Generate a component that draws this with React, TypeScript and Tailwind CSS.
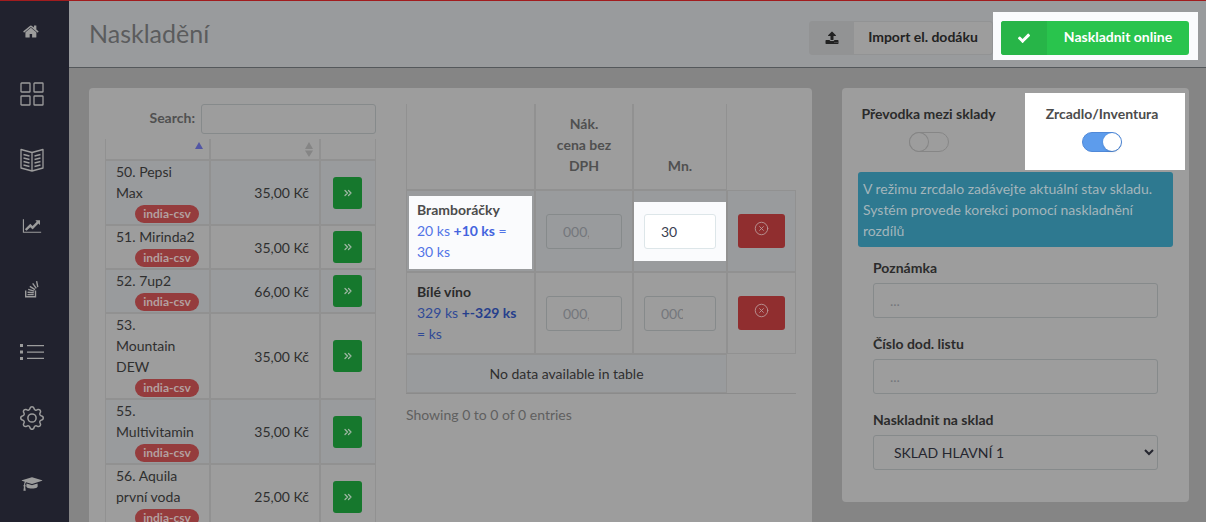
import React, { useState } from 'react';
import { BsGear } from 'react-icons/bs';
import { ChevronsRight, CircleX } from 'lucide-react';

type IconProps = { className?: string };

const HomeIcon = ({ className }: IconProps) => (
  <svg viewBox="0 0 1792 1792" fill="currentColor" className={className}>
    <path d="M1408 992v480q0 26-19 45t-45 19h-384v-384h-256v384h-384q-26 0-45-19t-19-45v-480q0-1 .5-3t.5-3l575-474 575 474q1 2 1 6zm223-69l-62 74q-8 9-21 11h-3q-13 0-21-7l-692-577-692 577q-12 8-24 7-13-2-21-11l-62-74q-8-10-7-23.500t11-21.500l719-599q32-26 76-26t76 26l244 204v-195q0-14 9-23t23-9h192q14 0 23 9t9 23v408l219 182q10 8 11 21.500t-7 23.500z" />
  </svg>
);

const GridIcon = ({ className }: IconProps) => (
  <svg viewBox="0 0 24 24" fill="none" stroke="currentColor" strokeWidth="1.3" className={className}>
    <rect x="1" y="1" width="9" height="9" rx="0.6" />
    <rect x="14" y="1" width="9" height="9" rx="0.6" />
    <rect x="1" y="14" width="9" height="9" rx="0.6" />
    <rect x="14" y="14" width="9" height="9" rx="0.6" />
  </svg>
);

const BookIcon = ({ className }: IconProps) => (
  <svg viewBox="0 0 24 24" fill="none" stroke="currentColor" strokeWidth="1.3" strokeLinejoin="round" className={className}>
    <path d="M1 1.500 12 4.500 23 1.500V20L12 23 1 20ZM12 4.500V23" />
    <path d="M3.500 6.500 9.500 8M3.500 10 9.500 11.500M3.500 13.500 9.500 15M3.500 17 9.500 18.500M20.500 6.500 14.500 8M20.500 10 14.500 11.500M20.500 13.500 14.500 15M20.500 17 14.500 18.500" />
  </svg>
);

const ChartIcon = ({ className }: IconProps) => (
  <svg viewBox="0 0 2048 1792" fill="currentColor" className={className}>
    <path d="M2048 1536v128h-2048v-1536h128v1408h1920zm-128-1248v435q0 21-19.500 29.500t-35.500-7.500l-121-121-633 633q-10 10-23 10t-23-10l-233-233-416 416-192-192 585-585q10-10 23-10t23 10l233 233 464-464-121-121q-16-16-7.500-35.500t29.500-19.500h435q14 0 23 9t9 23z" />
  </svg>
);

const StackIcon = ({ className }: IconProps) => (
  <svg viewBox="0 0 16 18" fill="none" stroke="currentColor" strokeWidth="1.400" className={className}>
    <path d="M1.700 10.500V16.800H11.500V10.500" />
    <path d="M3.500 14.600H9.700M3.600 12.200 9.800 12.800M4.200 9.400 10.200 11.200M5.800 6.300 11 9.700M8.700 3.400 12.300 8.300M12.600 1.200 13.800 7.200" />
  </svg>
);

const ListIcon = ({ className }: IconProps) => (
  <svg viewBox="0 0 24 16" fill="currentColor" className={className}>
    <path d="M0 0h3v3H0zM0 6.500h3v3H0zM0 13h3v3H0zM7 1h17v1.300H7zM7 7.400h17v1.300H7zM7 13.800h17v1.300H7z" />
  </svg>
);

const GraduationIcon = ({ className }: IconProps) => (
  <svg viewBox="0 0 2304 1792" fill="currentColor" className={className}>
    <path d="M1774 836l18 316q4 69-82 128t-235 93.500-323 34.500-323-34.500-235-93.500-82-128l18-316 574 181q22 7 48 7t48-7zm530-324q0 23-22 31l-1120 352q-4 1-10 1t-10-1l-652-206q-43 34-71 111.500t-34 178.500q63 36 63 109 0 69-58 107l58 433q2 14-8 25-9 11-24 11h-192q-15 0-24-11-10-11-8-25l58-433q-58-38-58-107 0-73 65-111 11-207 98-330l-333-104q-22-8-22-31t22-31l1120-352q4-1 10-1t10 1l1120 352q22 8 22 31z" />
  </svg>
);

const UploadIcon = ({ className }: IconProps) => (
  <svg viewBox="0 0 1792 1792" fill="currentColor" className={className}>
    <path d="M1344 1472q0-26-19-45t-45-19-45 19-19 45 19 45 45 19 45-19 19-45zm256 0q0-26-19-45t-45-19-45 19-19 45 19 45 45 19 45-19 19-45zm128-224v320q0 40-28 68t-68 28h-1472q-40 0-68-28t-28-68v-320q0-40 28-68t68-28h427q21 56 70.500 92t110.500 36h256q61 0 110.500-36t70.500-92h427q40 0 68 28t28 68zm-325-648q-17 40-59 40h-256v448q0 26-19 45t-45 19h-256q-26 0-45-19t-19-45v-448h-256q-42 0-59-40-17-39 14-69l448-448q18-19 45-19t45 19l448 448q31 30 14 69z" />
  </svg>
);

const CheckIcon = ({ className }: IconProps) => (
  <svg viewBox="0 0 1792 1792" fill="currentColor" className={className}>
    <path d="M1671 566q0 40-28 68l-724 724-136 136q-28 28-68 28t-68-28l-136-136-362-362q-28-28-28-68t28-68l136-136q28-28 68-28t68 28l294 295 656-657q28-28 68-28t68 28l136 136q28 28 28 68z" />
  </svg>
);

const NAV = [
  { label: 'Domů', icon: <HomeIcon className="w-[17px] h-[17px]" />, height: 'h-[60px]' },
  { label: 'Přehled', icon: <GridIcon className="w-6 h-6" />, height: 'h-[66px]' },
  { label: 'Katalog', icon: <BookIcon className="w-6 h-6" />, height: 'h-[66px]' },
  { label: 'Statistiky', icon: <ChartIcon className="w-5 h-4" />, height: 'h-[66px]' },
  { label: 'Sklad', icon: <StackIcon className="w-4 h-[18px]" />, height: 'h-[60px]' },
  { label: 'Seznamy', icon: <ListIcon className="w-6 h-4" />, height: 'h-[66px]' },
  { label: 'Nastavení', icon: <BsGear className="w-6 h-6" />, height: 'h-[66px]' },
  { label: 'Nápověda', icon: <GraduationIcon className="w-[22px] h-4" />, height: 'h-[66px]' }
];

const PRODUCTS = [
  { name: '50. Pepsi Max', price: '35,00 Kč' },
  { name: '51. Mirinda2', price: '35,00 Kč' },
  { name: '52. 7up2', price: '66,00 Kč' },
  { name: '53. Mountain DEW', price: '35,00 Kč' },
  { name: '55. Multivitamin', price: '35,00 Kč' },
  { name: '56. Aquila první voda', price: '25,00 Kč' }
];

const ITEMS = [
  { name: 'Bramboráčky', before: '20 ks ', change: '+10 ks', after: ' = 30 ks', qty: '30', active: true },
  { name: 'Bílé víno', before: '329 ks ', change: '+-329 ks', after: ' = ks', qty: '', active: false }
];

const FIELD = 'block w-full h-[35px] rounded-[3px] border border-[#868a8b] bg-transparent text-[#25262f] placeholder:text-[#74777c] outline-none';

const Sidebar = () => (
  <nav className="w-[69px] shrink-0 bg-[#21222e] text-[#9c9c9c]">
    {NAV.map(item => (
      <a key={item.label} href="#" aria-label={item.label} className={`flex items-center justify-center pr-[6px] ${item.height}`}>
        {item.icon}
      </a>
    ))}
  </nav>
);

const Header = () => (
  <header className="flex items-start h-[67px] pr-2 pl-5 bg-[#999b9d] border-b border-[#54585b]">
    <h1 className="flex-1 pt-4 text-[25px] leading-8 text-[#5b5c5d]">Naskladění</h1>
    <button className="flex mt-5 h-[34px] w-[184px] rounded-[3px] border border-[#929394] bg-[#9d9d9d] font-bold text-[#222222]">
      <span className="flex items-center justify-center w-11 h-full bg-[#929394]">
        <UploadIcon className="w-[14px] h-[14px]" />
      </span>
      <span className="flex-1 self-center pb-[3px]">Import el. dodáku</span>
    </button>
    <div className="mt-[11px] pt-[9px] pb-[5px] pl-2 pr-[9px] bg-[#fafbfd]">
      <button className="flex h-[34px] w-[188px] rounded-[3px] overflow-hidden bg-[#29c44d] font-bold text-white">
        <span className="flex items-center justify-center w-[46px] h-full bg-[#27b548]">
          <CheckIcon className="w-[14px] h-[14px]" />
        </span>
        <span className="flex-1 self-center pb-[3px]">Naskladnit online</span>
      </button>
    </div>
  </header>
);

const ProductTable = () => (
  <section className="w-[271px] shrink-0">
    <div className="flex items-center justify-end gap-[6px] mb-[5px]">
      <label htmlFor="search" className="pb-[3px] font-bold text-[#505050]">Search:</label>
      <input id="search" className="w-[175px] h-[30px] px-2 rounded-[3px] border border-[#868a8b] bg-transparent outline-none" />
    </div>
    <table className="w-full table-fixed border-separate border-spacing-0">
      <thead>
        <tr className="h-[21px]">
          <th className="w-[105px] border border-t-0 border-[#919191] align-top">
            <svg viewBox="0 0 8 7" className="w-2 h-[7px] mt-[3px] ml-auto mr-[6px]">
              <path d="M0 7 4 0l4 7z" fill="#5256a4" />
            </svg>
          </th>
          <th className="w-[110px] border border-t-0 border-[#919191] align-top">
            <svg viewBox="0 0 8 15" className="w-2 h-[15px] mt-[3px] ml-auto mr-[6px]">
              <path d="M0 7 4 0l4 7zM0 8.500h8l-4 6.500z" fill="#858585" />
            </svg>
          </th>
          <th className="border border-t-0 border-[#919191]" />
        </tr>
      </thead>
      <tbody>
        {PRODUCTS.map(product => (
          <tr key={product.name} className="odd:bg-[#999b9d]">
            <td className="px-[10px] border border-[#919191]">
              <div className="w-20">{product.name}</div>
              <div className="flex justify-end items-center h-[21px]">
                <span className="w-16 h-[18px] rounded-full bg-[#953c3d] text-center text-xs leading-[17px] font-bold text-[#b3a0a0]">india-csv</span>
              </div>
            </td>
            <td className="px-[10px] border border-[#919191] text-right">{product.price}</td>
            <td className="border border-[#919191]">
              <button aria-label="Přidat" className="flex items-center justify-center w-[29px] h-8 ml-3 rounded-[3px] bg-[#16782d] text-[#9fb6a3]">
                <ChevronsRight size={12} strokeWidth={2.5} />
              </button>
            </td>
          </tr>
        ))}
      </tbody>
    </table>
  </section>
);

const ItemTable = () => (
  <section className="flex-1 min-w-0">
    <table className="w-full table-fixed border-separate border-spacing-0 border-b border-[#8b8b8b]">
      <thead>
        <tr className="align-bottom font-bold text-[#505050]">
          <th className="w-[129px] border border-t-0 border-[#919191]" />
          <th className="w-[98px] pt-[9px] pb-[13px] px-[18px] border border-t-0 border-[#919191]">Nák. cena bez DPH</th>
          <th className="w-[94px] pb-[13px] border border-t-0 border-[#919191]">Mn.</th>
          <th />
        </tr>
      </thead>
      <tbody>
        {ITEMS.map(item => (
          <tr key={item.name} className="odd:bg-[#999b9d]">
            <td className="pt-[5px] pb-[2px] px-[2px] border border-[#919191]">
              <div className={item.active ? 'pt-[3px] pb-[7px] pl-2 pr-3 bg-[#fafbfd] text-[#5274e6]' : 'pt-[3px] pb-[7px] pl-2 pr-3 text-[#304a96]'}>
                <div className={item.active ? 'font-bold text-[#4c4c4c]' : 'font-bold text-[#2b2b2b]'}>{item.name}</div>
                <p>
                  {item.before}
                  <b className={item.active ? 'text-[#4363de]' : 'text-[#263f8c]'}>{item.change}</b>
                  {item.after}
                </p>
              </div>
            </td>
            <td className="px-[10px] border border-[#919191]">
              <input aria-label={`Nákupní cena ${item.name}`} placeholder="000,00" className={`${FIELD} pl-4 pr-8`} />
            </td>
            <td className="border border-[#919191]">
              <div className={item.active ? 'py-3 px-[10px] bg-[#fafbfd]' : 'py-3 px-[10px]'}>
                <input
                  aria-label={`Množství ${item.name}`}
                  placeholder="000"
                  defaultValue={item.qty}
                  className={item.active
                    ? 'block w-full h-[35px] pl-4 pr-8 rounded-[3px] border border-[#dde6e9] bg-white text-[#3a3f51] outline-none'
                    : `${FIELD} pl-4 pr-8`}
                />
              </div>
            </td>
            <td className="border border-[#919191]">
              <button aria-label="Odebrat" className="flex justify-center w-[47px] h-[34px] pt-[7px] mx-auto rounded-[3px] bg-[#902e2f] text-[#b99393]">
                <CircleX size={15} strokeWidth={1.5} />
              </button>
            </td>
          </tr>
        ))}
        <tr>
          <td colSpan={3} className="h-[39px] border border-[#919191] bg-[#999b9d] text-center">No data available in table</td>
          <td />
        </tr>
      </tbody>
    </table>
    <p className="mt-[10px] text-[#606060]">Showing 0 to 0 of 0 entries</p>
  </section>
);

const StockForm = () => {
  const [transfer, setTransfer] = useState(false);
  const [mirror, setMirror] = useState(true);

  return (
    <aside className="w-[347px] shrink-0 self-start pt-[5px] pb-8 rounded bg-[#9d9d9d]">
      <div className="flex pr-1">
        <label className="flex-1 flex flex-col items-center gap-2 pt-[10px] pr-[10px] font-bold text-[#2b2b2b]">
          Převodka mezi sklady
          <input
            type="checkbox"
            checked={transfer}
            onChange={e => setTransfer(e.target.checked)}
            className="appearance-none flex w-10 h-5 rounded-full border border-[#868686] before:w-[18px] before:h-[18px] before:rounded-full before:bg-[#9d9d9d] before:shadow-[0_0_0_1px_#858585]"
          />
        </label>
        <label className="w-40 flex flex-col items-center gap-2 pt-[10px] pb-[18px] pr-[6px] bg-white font-bold text-[#4c4c4c]">
          Zrcadlo/Inventura
          <input
            type="checkbox"
            checked={mirror}
            onChange={e => setMirror(e.target.checked)}
            className="appearance-none flex justify-end w-10 h-5 rounded-full border border-[#5089d8] bg-[#5d9cec] before:w-[18px] before:h-[18px] before:rounded-full before:bg-white before:shadow-sm"
          />
        </label>
      </div>
      <div className="mt-[2px] mx-4 px-[5px] py-[6px] rounded-[3px] bg-[#2e7990] text-[#a3b5bb]">
        V režimu zrcdalo zadávejte aktuální stav skladu. Systém provede korekci pomocí naskladnění rozdílů
      </div>
      <form className="flex flex-col gap-[15px] pt-[10px] px-[31px]">
        <div>
          <label htmlFor="note" className="block mb-[5px] font-bold text-[#2b2b2b]">Poznámka</label>
          <input id="note" placeholder="..." className={`${FIELD} px-4`} />
        </div>
        <div>
          <label htmlFor="sheet" className="block mb-[5px] font-bold text-[#2b2b2b]">Číslo dod. listu</label>
          <input id="sheet" placeholder="..." className={`${FIELD} px-4`} />
        </div>
        <div>
          <label htmlFor="stock" className="block mb-[5px] font-bold text-[#2b2b2b]">Naskladnit na sklad</label>
          <select id="stock" className={`${FIELD} pl-4`}>
            <option>SKLAD HLAVNÍ 1</option>
          </select>
        </div>
      </form>
    </aside>
  );
};

export default function App() {
  return (
    <div className="h-screen overflow-hidden flex border-t border-[#a11c1e] bg-[#858585] font-['Lato','Noto_Sans',sans-serif] text-[14px] leading-[21px] text-[#2f2f2f]">
      <Sidebar />
      <div className="flex-1 min-w-0">
        <Header />
        <main className="flex gap-[30px] pt-5 pl-5 pr-[17px]">
          <div className="flex-1 min-w-0 flex gap-[30px] p-4 rounded bg-[#9d9d9d]">
            <ProductTable />
            <ItemTable />
          </div>
          <StockForm />
        </main>
      </div>
    </div>
  );
}
